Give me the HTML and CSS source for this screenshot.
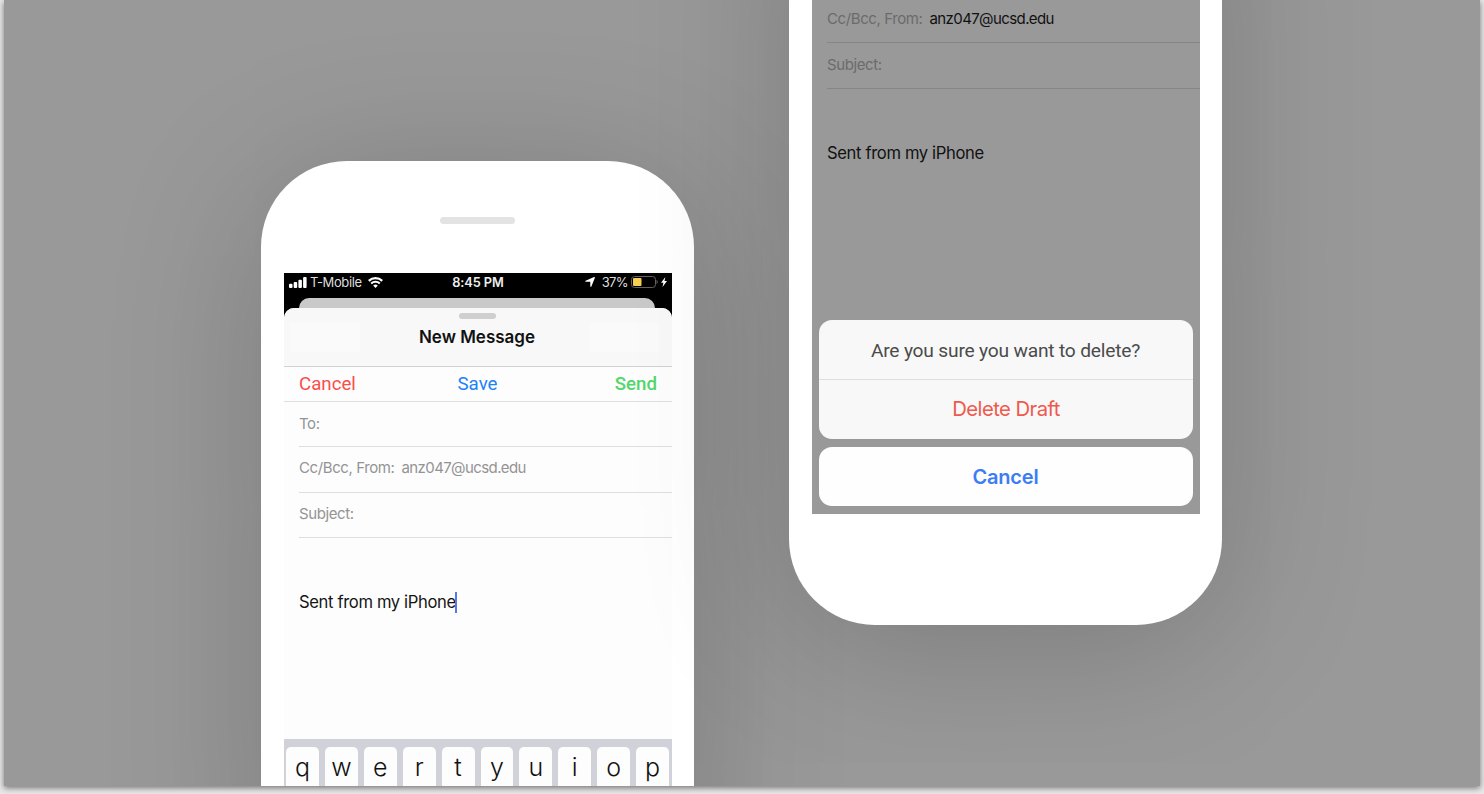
FILE: index.html
```html
<!DOCTYPE html>
<html lang="en">
<head>
<meta charset="utf-8">
<title>New Message</title>
<link rel="stylesheet" href="styles.css">
</head>
<body>
<div class="frame">
<main class="stage">
  <section class="phone phone-confirm">
    <div class="screen dimmed">
      <div class="field"><span class="cc">Cc/Bcc, From:</span><span class="mail">anz047@ucsd.edu</span></div>
      <div class="field"><span class="subject">Subject:</span></div>
      <div class="body-text"><span>Sent from my iPhone</span></div>
      <div class="sheet-group">
        <div class="alert">
          <div class="question"><span>Are you sure you want to delete?</span></div>
          <div class="delete"><span>Delete Draft</span></div>
        </div>
        <div class="dismiss"><span>Cancel</span></div>
      </div>
    </div>
  </section>
  <section class="phone phone-compose">
    <div class="speaker"></div>
    <div class="screen">
      <div class="status">
        <div class="status-left">
          <svg width="18" height="11" viewBox="0 0 18 11" fill="#fff"><rect x="0" y="6.8" width="3.5" height="4.2" rx="1"/><rect x="4.7" y="5" width="3.5" height="6" rx="1"/><rect x="9.4" y="2.7" width="3.5" height="8.3" rx="1"/><rect x="14.1" y="0" width="3.5" height="11" rx="1"/></svg>
          <span class="carrier">T-Mobile</span>
          <svg width="15" height="11" viewBox="0 0 15 11" fill="none" stroke="#fff"><path d="M.8 3.9a9.6 9.6 0 0 1 13.4 0" stroke-width="2.2"/><path d="M3.2 6.5a6.2 6.2 0 0 1 8.6 0" stroke-width="2"/><path d="M5.2 8.6a3.4 3.4 0 0 1 4.6 0L7.5 11z" fill="#fff" stroke="none"/></svg>
        </div>
        <span class="time">8:45 PM</span>
        <div class="status-right">
          <svg width="10" height="10" viewBox="0 0 10 10" fill="#fff"><path d="M9.1.1C9.7-.1 10.1.3 9.9.8L6.4 9.4c-.3.7-1.1.6-1.1-.1V4.8H.8C0 4.8 0 4 .6 3.7z"/></svg>
          <span class="percent">37%</span>
          <svg class="battery" width="27" height="12" viewBox="0 0 27 12"><rect x=".5" y=".5" width="24" height="11" rx="3" fill="none" stroke="#66645d"/><path d="M25.5 4c1.6.7 1.6 3.3 0 4z" fill="#66645d"/><rect x="2" y="2" width="8.5" height="8" rx="1" fill="#f7cf52"/></svg>
          <svg class="bolt" width="6" height="10" viewBox="0 0 6 10" fill="#fff"><path d="M4.4 0 0 5.7h2.4L1.5 10 6 4.1H3.5z"/></svg>
        </div>
      </div>
      <div class="back-sheet"></div>
      <div class="sheet">
        <header class="sheet-head">
          <div class="grabber"></div>
          <div class="head-row"><div class="patch"></div><h1 class="title">New Message</h1><div class="patch"></div></div>
        </header>
        <nav class="actions"><span class="act-cancel">Cancel</span><span class="act-save">Save</span><span class="act-send">Send</span></nav>
        <div class="field first"><span>To:</span></div>
        <div class="field"><span class="cc">Cc/Bcc, From:</span><span class="mail">anz047@ucsd.edu</span></div>
        <div class="field"><span class="subject">Subject:</span></div>
        <div class="body-text"><span>Sent from my iPhone</span><i class="caret"></i></div>
      </div>
      <div class="keyboard"><b>q</b><b>w</b><b>e</b><b>r</b><b>t</b><b>y</b><b>u</b><b>i</b><b>o</b><b>p</b></div>
    </div>
  </section>
</main>
</div>
</body>
</html>
```
FILE: styles.css
```css
* { box-sizing: border-box; }
body { margin: 0; height: 794px; overflow: hidden; background: #e8e8e8; font-family: Inter, "Liberation Sans", sans-serif; }
svg { display: block; }
.frame { margin: 0 4px; height: 786px; box-shadow: 0 2px 6px rgba(0,0,0,.5); }
.stage { height: 786px; padding-left: 257px; display: flex; flex-direction: row-reverse; justify-content: flex-end; align-items: flex-start; gap: 95px; background: #999; overflow: hidden; }
.phone { width: 433px; flex: none; background: #fff; padding: 0 22px 0 23px; box-shadow: 0 20px 155px rgba(0,0,0,.2); }
.phone-compose { height: 785px; margin-top: 161px; border-radius: 86px 86px 0 0; }
.phone-confirm { height: 785px; margin-top: -160px; padding-top: 160px; border-radius: 0 0 86px 86px; background: #fff; }
.speaker { width: 75px; height: 7px; border-radius: 4px; background: #e3e3e3; margin: 56px 0 49px 156px; }
.screen { width: 388px; height: 513px; display: flex; flex-direction: column; background: #000; }
.status { height: 25px; flex: none; display: grid; grid-template-columns: 1fr auto 1fr; align-items: center; color: #dedede; font-size: 13px; padding: 0 5px 7px; }
.status-left, .status-right { display: flex; align-items: center; }
.carrier { margin: 0 6px 0 3px; letter-spacing: -.4px; }
.time { color: #eee; font-weight: 600; font-size: 12.8px; letter-spacing: -.1px; }
.status-right { justify-content: flex-end; }
.percent { margin: 0 3px 0 7px; letter-spacing: -.6px; }
.bolt { margin-left: 3px; }
.back-sheet { flex: none; width: 356px; height: 10px; margin-left: 15px; background: #c9c9c9; border-radius: 10px 10px 0 0; }
.sheet { flex: 1; background: #fdfdfd; border-radius: 10px 10px 0 0; overflow: hidden; }
.sheet-head { height: 59px; background: #f8f8f8; border-bottom: 1px solid #d2d2d2; padding: 5px 12px 0 6px; }
.grabber { width: 37px; height: 6px; border-radius: 3px; background: #cfcfcf; margin: 0 auto 4px 169px; }
.head-row { display: flex; justify-content: space-between; align-items: center; height: 29px; }
.patch { width: 70px; height: 29px; background: #fafafa; }
.title { margin: 0 0 2px 4px; font-size: 17px; font-weight: 600; color: #111; }
.actions { height: 35px; border-bottom: 1px solid #dedede; display: grid; grid-template-columns: 1fr auto 1fr; align-items: center; padding: 0 16px 0 15px; font: 500 18.7px Roboto, sans-serif; }
.act-cancel { color: #fa4f49; font-weight: 450; }
.act-save { color: #1b82fb; font-weight: 450; }
.act-send { color: #52d76b; text-align: right; margin-right: -1px; }
.field { height: 45.6px; flex: none; margin-left: 15px; padding-bottom: 3px; border-bottom: 1px solid #dedede; display: flex; align-items: center; font-size: 15px; letter-spacing: -.4px; color: #949494; }
.sheet .first { height: 45px; padding-bottom: 2px; }
.mail { margin-left: 7px; letter-spacing: -.6px; }
.body-text { margin: 53px 0 0 15px; height: 22px; display: flex; align-items: center; font-size: 16.6px; letter-spacing: -.36px; color: #151515; }
.caret { width: 2px; height: 21px; background: #5879e5; margin-left: -1px; }
.keyboard { height: 47px; flex: none; background: #d1d2d9; padding: 8px 3px 0 2px; display: grid; grid-template-columns: repeat(10, 1fr); gap: 6px; overflow: hidden; }
.keyboard b { font-weight: 350; font-size: 25px; line-height: 41px; height: 45px; background: #fdfdfd; border-radius: 5px; text-align: center; color: #111; }
.dimmed { height: 514px; background: #999; }
.dimmed .field { color: #6b6b6b; border-color: #868686; }
.dimmed .field:first-child { height: 43px; padding-bottom: 5px; }
.dimmed .field:nth-child(2) { padding-bottom: 2px; }
.dimmed .mail, .dimmed .body-text { color: #111; }
.sheet-group { margin: auto 7px 8px; }
.alert, .dismiss { border-radius: 13px; overflow: hidden; background: #f8f8f8; }
.alert { height: 119px; margin-bottom: 8px; }
.question, .delete, .dismiss { height: 59px; display: flex; justify-content: center; align-items: center; }
.question { height: 60px; padding: 2px 1px 0 0; border-bottom: 1px solid #dedede; color: #4b4b4b; font: 400 19.2px Roboto, sans-serif; letter-spacing: -.2px; }
.delete { color: #ef594e; font-size: 20.3px; letter-spacing: -.55px; padding-bottom: 2px; }
.dismiss { color: #3b7df5; background: #fefefe; font-size: 20px; font-weight: 600; letter-spacing: -.2px; padding-right: 1px; }
```
